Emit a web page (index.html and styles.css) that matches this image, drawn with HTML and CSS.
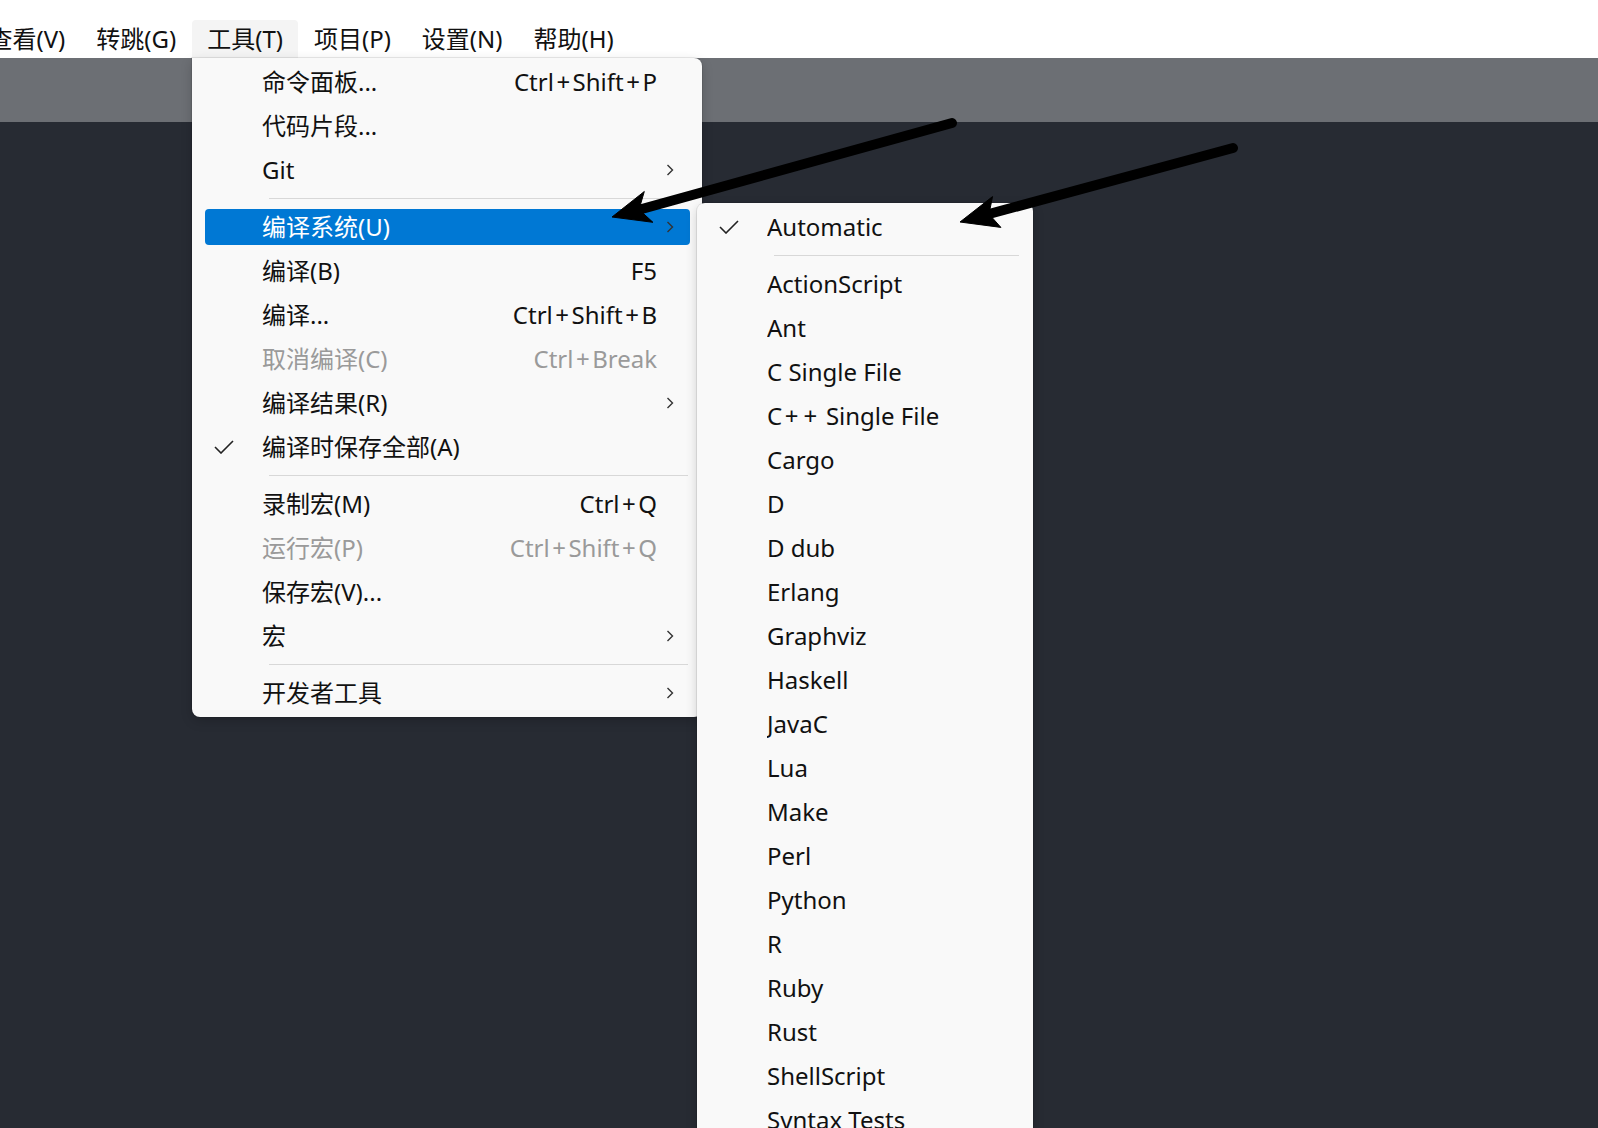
FILE: index.html
```html
<!DOCTYPE html>
<html lang="zh-CN">
<head>
<meta charset="utf-8">
<title>工具菜单</title>
<link rel="stylesheet" href="styles.css">
</head>
<body>
<div class="app">
  <div class="menubar">
    <div class="mb-item">查看(V)</div>
    <div class="mb-item">转跳(G)</div>
    <div class="mb-item active">工具(T)</div>
    <div class="mb-item">项目(P)</div>
    <div class="mb-item">设置(N)</div>
    <div class="mb-item">帮助(H)</div>
  </div>
  <div class="tabbar"></div>
  <div class="editor"></div>

  <div class="menu main-menu">
    <div class="row"><span class="chk"></span><span class="lbl">命令面板...</span><span class="key">Ctrl<span class="plus">+</span>Shift<span class="plus">+</span>P</span><span class="arr"></span></div>
    <div class="row"><span class="chk"></span><span class="lbl">代码片段...</span><span class="key"></span><span class="arr"></span></div>
    <div class="row"><span class="chk"></span><span class="lbl">Git</span><span class="key"></span><span class="arr"><svg class="chev" viewBox="0 0 8 12"><path d="M1.5 1 L6.5 6 L1.5 11"/></svg></span></div>
    <div class="sep"></div>
    <div class="row hl"><span class="chk"></span><span class="lbl">编译系统(U)</span><span class="key"></span><span class="arr"><svg class="chev" viewBox="0 0 8 12"><path d="M1.5 1 L6.5 6 L1.5 11"/></svg></span></div>
    <div class="row"><span class="chk"></span><span class="lbl">编译(B)</span><span class="key">F5</span><span class="arr"></span></div>
    <div class="row"><span class="chk"></span><span class="lbl">编译...</span><span class="key">Ctrl<span class="plus">+</span>Shift<span class="plus">+</span>B</span><span class="arr"></span></div>
    <div class="row off"><span class="chk"></span><span class="lbl">取消编译(C)</span><span class="key">Ctrl<span class="plus">+</span>Break</span><span class="arr"></span></div>
    <div class="row"><span class="chk"></span><span class="lbl">编译结果(R)</span><span class="key"></span><span class="arr"><svg class="chev" viewBox="0 0 8 12"><path d="M1.5 1 L6.5 6 L1.5 11"/></svg></span></div>
    <div class="row"><span class="chk"><svg class="tick" viewBox="0 0 20 14"><path d="M1 7 L7 13 L19 1"/></svg></span><span class="lbl">编译时保存全部(A)</span><span class="key"></span><span class="arr"></span></div>
    <div class="sep"></div>
    <div class="row"><span class="chk"></span><span class="lbl">录制宏(M)</span><span class="key">Ctrl<span class="plus">+</span>Q</span><span class="arr"></span></div>
    <div class="row off"><span class="chk"></span><span class="lbl">运行宏(P)</span><span class="key">Ctrl<span class="plus">+</span>Shift<span class="plus">+</span>Q</span><span class="arr"></span></div>
    <div class="row"><span class="chk"></span><span class="lbl">保存宏(V)...</span><span class="key"></span><span class="arr"></span></div>
    <div class="row"><span class="chk"></span><span class="lbl">宏</span><span class="key"></span><span class="arr"><svg class="chev" viewBox="0 0 8 12"><path d="M1.5 1 L6.5 6 L1.5 11"/></svg></span></div>
    <div class="sep"></div>
    <div class="row"><span class="chk"></span><span class="lbl">开发者工具</span><span class="key"></span><span class="arr"><svg class="chev" viewBox="0 0 8 12"><path d="M1.5 1 L6.5 6 L1.5 11"/></svg></span></div>
  </div>

  <div class="menu sub-menu">
    <div class="row"><span class="chk"><svg class="tick" viewBox="0 0 20 14"><path d="M1 7 L7 13 L19 1"/></svg></span><span class="lbl">Automatic</span></div>
    <div class="sep"></div>
    <div class="row"><span class="chk"></span><span class="lbl">ActionScript</span></div>
    <div class="row"><span class="chk"></span><span class="lbl">Ant</span></div>
    <div class="row"><span class="chk"></span><span class="lbl">C Single File</span></div>
    <div class="row"><span class="chk"></span><span class="lbl">C<span class="plus">+</span><span class="plus">+</span> Single File</span></div>
    <div class="row"><span class="chk"></span><span class="lbl">Cargo</span></div>
    <div class="row"><span class="chk"></span><span class="lbl">D</span></div>
    <div class="row"><span class="chk"></span><span class="lbl">D dub</span></div>
    <div class="row"><span class="chk"></span><span class="lbl">Erlang</span></div>
    <div class="row"><span class="chk"></span><span class="lbl">Graphviz</span></div>
    <div class="row"><span class="chk"></span><span class="lbl">Haskell</span></div>
    <div class="row"><span class="chk"></span><span class="lbl">JavaC</span></div>
    <div class="row"><span class="chk"></span><span class="lbl">Lua</span></div>
    <div class="row"><span class="chk"></span><span class="lbl">Make</span></div>
    <div class="row"><span class="chk"></span><span class="lbl">Perl</span></div>
    <div class="row"><span class="chk"></span><span class="lbl">Python</span></div>
    <div class="row"><span class="chk"></span><span class="lbl">R</span></div>
    <div class="row"><span class="chk"></span><span class="lbl">Ruby</span></div>
    <div class="row"><span class="chk"></span><span class="lbl">Rust</span></div>
    <div class="row"><span class="chk"></span><span class="lbl">ShellScript</span></div>
    <div class="row"><span class="chk"></span><span class="lbl">Syntax Tests</span></div>
    <div class="row"><span class="chk"></span><span class="lbl">Syntax Tests - Sublime Text</span></div>
  </div>

  <svg class="arrows" viewBox="0 0 1598 1128">
    <line x1="952" y1="123" x2="640" y2="209.5"/>
    <polygon points="612,217 644.3,191.5 639,209.5 652.9,222.3"/>
    <line x1="1233" y1="148" x2="989" y2="214"/>
    <polygon points="960,222 992.5,196.6 989,214.1 1000.9,227.4"/>
  </svg>
</div>
</body>
</html>
```

FILE: styles.css
```css
html, body {
  margin: 0;
  padding: 0;
  height: 100%;
  overflow: hidden;
}

body {
  font-family: "Noto Sans", "Noto Sans CJK SC", sans-serif;
  font-size: 24px;
  color: #111;
}

.app {
  position: relative;
  height: 1128px;
  display: flex;
  flex-direction: column;
  overflow: hidden;
}

.menubar {
  height: 58px;
  flex: none;
  background: #ffffff;
  display: flex;
  align-items: flex-end;
  margin-left: -27px;
}

.mb-item {
  height: 38px;
  line-height: 38px;
  padding: 0 15.5px;
  white-space: nowrap;
  border-radius: 4px 4px 0 0;
}

.mb-item.active {
  background: #f4f4f4;
}

.tabbar {
  height: 64px;
  flex: none;
  background: #6c6f74;
}

.editor {
  flex: 1;
  background: #272b33;
}

.menu {
  position: absolute;
  background: #f9f9f9;
  border-radius: 8px;
  box-shadow: 0 0 0 1px rgba(0, 0, 0, 0.08), 0 4px 12px rgba(0, 0, 0, 0.18);
  display: flex;
  flex-direction: column;
  padding: 2px 0;
  box-sizing: border-box;
}

.main-menu {
  left: 192px;
  top: 58px;
  width: 510px;
  border-top-left-radius: 0;
  z-index: 2;
}

.sub-menu {
  left: 697px;
  top: 203px;
  width: 336px;
  z-index: 3;
}

.row {
  height: 36px;
  margin: 4px 12px 4px 13px;
  border-radius: 4px;
  display: grid;
  grid-template-columns: 57px 1fr auto 33px;
  align-items: center;
  line-height: 36px;
  white-space: nowrap;
}

.row.hl {
  background: #0078d4;
  color: #ffffff;
}

.row.off {
  color: #9a9a9a;
}

.plus {
  padding: 0 2.5px;
}

.chk {
  display: flex;
  align-items: center;
  height: 36px;
}

.tick {
  width: 20px;
  height: 14px;
  margin-left: 9px;
  fill: none;
  stroke: #222;
  stroke-width: 1.6;
}

.lbl {
  overflow: hidden;
}

.key {
  text-align: right;
}

.arr {
  display: flex;
  align-items: center;
  height: 36px;
}

.chev {
  width: 8px;
  height: 12px;
  margin-left: 9px;
  fill: none;
  stroke: #333;
  stroke-width: 1.4;
}

.sep {
  height: 13px;
  flex: none;
  position: relative;
}

.sep::after {
  content: "";
  display: block;
  height: 1px;
  margin: 6px 14px 0 77px;
  background: #d8d8d8;
}

.arrows {
  position: absolute;
  left: 0;
  top: 0;
  width: 1598px;
  height: 1128px;
  z-index: 5;
  pointer-events: none;
}

.arrows line {
  stroke: #000;
  stroke-width: 10;
  stroke-linecap: round;
}

.arrows polygon {
  fill: #000;
  stroke: #000;
  stroke-width: 1;
  stroke-linejoin: round;
}
```
